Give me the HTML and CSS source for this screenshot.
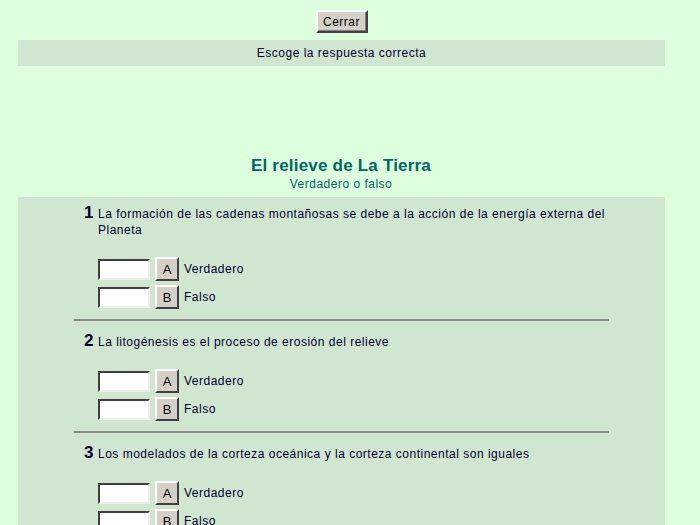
FILE: index.html
```html
<!DOCTYPE html>
<html lang="es">
<head>
<meta charset="utf-8">
<title>El relieve de La Tierra</title>
<link rel="stylesheet" href="styles.css">
</head>
<body>
<div class="top"><button class="btn-close" type="button">Cerrar</button></div>
<div class="bar">Escoge la respuesta correcta</div>
<div class="heading">
  <h1 class="title">El relieve de La Tierra</h1>
  <div class="subtitle">Verdadero o falso</div>
</div>
<div class="panel">
  <div class="q">
    <div class="q-head"><span class="num">1</span><span class="q-text">La formación de las cadenas montañosas se debe a la acción de la energía externa del Planeta</span></div>
    <div class="opts">
      <div class="opt"><span class="box"></span><span class="key">A</span><span class="lbl">Verdadero</span></div>
      <div class="opt"><span class="box"></span><span class="key">B</span><span class="lbl">Falso</span></div>
    </div>
  </div>
  <div class="sep"></div>
  <div class="q">
    <div class="q-head"><span class="num">2</span><span class="q-text">La litogénesis es el proceso de erosión del relieve</span></div>
    <div class="opts">
      <div class="opt"><span class="box"></span><span class="key">A</span><span class="lbl">Verdadero</span></div>
      <div class="opt"><span class="box"></span><span class="key">B</span><span class="lbl">Falso</span></div>
    </div>
  </div>
  <div class="sep"></div>
  <div class="q">
    <div class="q-head"><span class="num">3</span><span class="q-text">Los modelados de la corteza oceánica y la corteza continental son iguales</span></div>
    <div class="opts">
      <div class="opt"><span class="box"></span><span class="key">A</span><span class="lbl">Verdadero</span></div>
      <div class="opt"><span class="box"></span><span class="key">B</span><span class="lbl">Falso</span></div>
    </div>
  </div>
</div>
</body>
</html>
```
FILE: styles.css
```css
html, body {
  margin: 0;
  padding: 0;
}
body {
  background: #ddffdd;
  font-family: "Liberation Sans", Arial, sans-serif;
  font-size: 12px;
  letter-spacing: 0.5px;
  color: #000033;
  overflow: hidden;
}
.top {
  display: flex;
  justify-content: center;
  padding: 10px 17px 7px 0;
}
.btn-close {
  width: 52px;
  height: 23px;
  padding: 0;
  background: #d4d0c8;
  border: 2px solid;
  border-color: #ffffff #404040 #404040 #ffffff;
  box-shadow: inset -1px -1px 0 #808080;
  font-family: "Liberation Sans", Arial, sans-serif;
  font-size: 12px;
  letter-spacing: 0.5px;
  color: #000;
}
.bar {
  margin: 0 35px 0 18px;
  height: 26px;
  background: #d0e6d0;
  display: flex;
  align-items: center;
  justify-content: center;
}
.heading {
  margin-top: 89px;
  text-align: center;
  color: #006666;
  padding-right: 18px;
}
.title {
  margin: 0;
  font-size: 17px;
  font-weight: bold;
  letter-spacing: 0.2px;
  line-height: 22px;
}
.subtitle {
  font-size: 12px;
  line-height: 16px;
  margin-top: -1px;
}
.panel {
  margin: 5px 35px 0 18px;
  background: #d0e6d0;
  padding: 8px 56px 0 56px;
  height: 400px;
}
.q {
  padding-left: 10px;
}
.q-head {
  display: flex;
  align-items: baseline;
  line-height: 16px;
}
.num {
  width: 14px;
  flex: none;
  font-size: 17px;
  font-weight: bold;
  letter-spacing: 0;
  color: #000033;
}
.q-text {
  flex: 1;
}
.opts {
  display: flex;
  flex-direction: column;
  gap: 4px;
  margin-top: 19px;
  padding-left: 14px;
  padding-bottom: 10px;
}
.opt {
  display: flex;
  align-items: center;
  height: 24px;
}
.box {
  width: 48px;
  height: 17px;
  background: #ffffff;
  border: 2px solid;
  border-color: #404040 #eeeeee #eeeeee #404040;
  margin-right: 5px;
}
.key {
  width: 20px;
  height: 20px;
  background: #d4d0c8;
  border: 2px solid;
  border-color: #ffffff #404040 #404040 #ffffff;
  display: flex;
  align-items: center;
  justify-content: center;
  font-size: 13px;
  letter-spacing: 0;
  color: #000;
  margin-right: 5px;
}
.lbl {
  color: #000033;
}
.sep {
  height: 2px;
  background: #888888;
  margin-bottom: 12px;
}
```
